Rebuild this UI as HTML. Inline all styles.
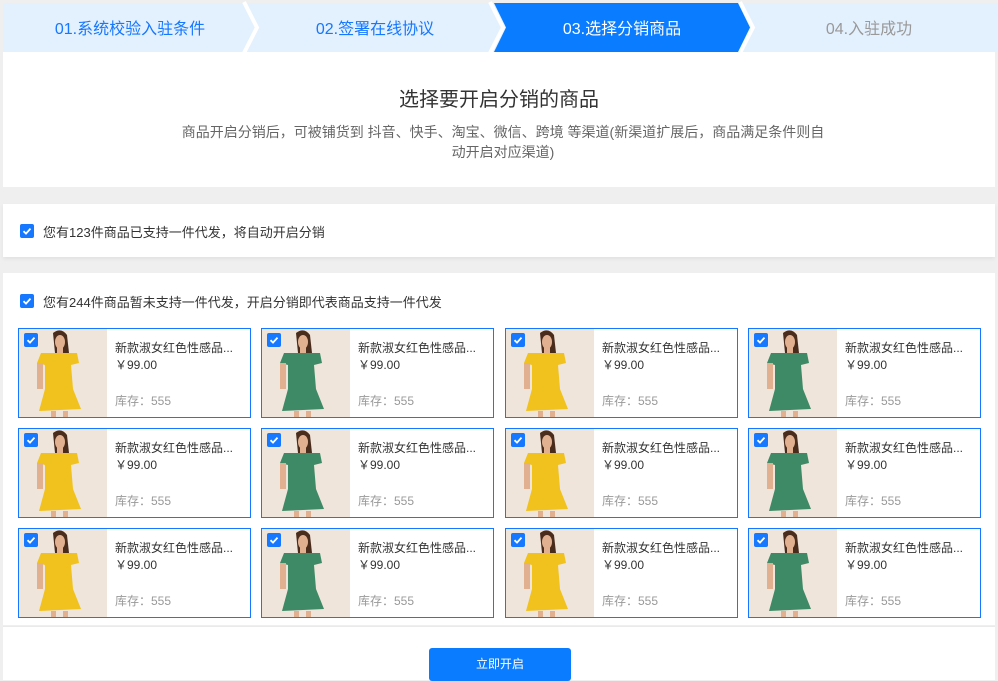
<!DOCTYPE html>
<html><head><meta charset="utf-8"><style>
*{margin:0;padding:0;box-sizing:border-box}
body{width:998px;height:680px;background:#efefef;position:relative;overflow:hidden;font-family:"Liberation Sans","Noto Sans CJK SC",sans-serif}
.abs{position:absolute}
.box{position:absolute;background:#fff;left:3px;width:992px}
.cb{position:absolute;width:14px;height:14px;background:#1677ff;border-radius:2px}
.cb svg{position:absolute;left:0;top:0}
.card{position:absolute;width:233px;height:90px;border:1px solid #1677ff;background:#fff}
.card .img{position:absolute;left:0;top:0;width:88px;height:88px}
.card .t{position:absolute;left:96px;top:10px;font-size:12px;color:#333;white-space:nowrap}
.card .p{position:absolute;left:96px;top:27px;font-size:12px;color:#333}
.card .s{position:absolute;left:96px;top:63px;font-size:12px;color:#999}
.card .cb{left:5px;top:4px}
</style></head><body>
<svg class="abs" style="left:0;top:0" width="998" height="53">
<rect x="3" y="3" width="995" height="49" fill="#e3f0fd"/>
<polygon points="494,3 738,3 750,27.5 738,52 494,52 506,27.5" fill="#0a7cff"/>
<polyline points="244,2 257,27.5 244,53" fill="none" stroke="#fff" stroke-width="4"/>
<polyline points="490,2 503,27.5 490,53" fill="none" stroke="#fff" stroke-width="4"/>
<polyline points="740,2 753,27.5 740,53" fill="none" stroke="#fff" stroke-width="4"/>
<text x="130" y="34" text-anchor="middle" font-size="16" fill="#1677ff" font-family="Liberation Sans, Noto Sans CJK SC, sans-serif">01.系统校验入驻条件</text>
<text x="375" y="34" text-anchor="middle" font-size="16" fill="#1677ff" font-family="Liberation Sans, Noto Sans CJK SC, sans-serif">02.签署在线协议</text>
<text x="622" y="34" text-anchor="middle" font-size="16" fill="#fff" font-family="Liberation Sans, Noto Sans CJK SC, sans-serif">03.选择分销商品</text>
<text x="869" y="34" text-anchor="middle" font-size="16" fill="#999" font-family="Liberation Sans, Noto Sans CJK SC, sans-serif">04.入驻成功</text>
</svg>
<svg width="0" height="0" style="position:absolute">
<defs>
<symbol id="y" viewBox="0 0 88 88">
<rect width="88" height="88" fill="#efe5db"/>
<path d="M34 4 q8 -6 14 2 l2 18 q-6 4 -14 0 z" fill="#4a2c1c"/>
<ellipse cx="41" cy="13" rx="5" ry="7" fill="#e0b090"/>
<rect x="38" y="18" width="6" height="6" fill="#e0b090"/>
<path d="M22 24 L58 24 L60 34 L52 36 L54 60 L62 80 L20 82 L26 60 L26 36 L18 34 Z" fill="#f1c21d"/>
<rect x="18" y="34" width="6" height="26" fill="#e0b090"/>
<rect x="32" y="82" width="5" height="6" fill="#e0b090"/><rect x="44" y="82" width="5" height="6" fill="#e0b090"/>
</symbol>
<symbol id="g" viewBox="0 0 88 88">
<rect width="88" height="88" fill="#efe5db"/>
<path d="M34 4 q8 -6 14 2 l2 18 q-6 4 -14 0 z" fill="#4a2c1c"/>
<ellipse cx="41" cy="13" rx="5" ry="7" fill="#e0b090"/>
<rect x="38" y="18" width="6" height="6" fill="#e0b090"/>
<path d="M22 24 L58 24 L60 34 L52 36 L54 60 L62 80 L20 82 L26 60 L26 36 L18 34 Z" fill="#3f8a66"/>
<rect x="18" y="34" width="6" height="26" fill="#e0b090"/>
<rect x="32" y="82" width="5" height="6" fill="#e0b090"/><rect x="44" y="82" width="5" height="6" fill="#e0b090"/>
</symbol>
<symbol id="ck" viewBox="0 0 14 14"><path d="M3.5 7.2 L6 9.6 L10.5 4.6" fill="none" stroke="#fff" stroke-width="1.8"/></symbol>
</defs></svg>

<div class="box" style="top:52px;height:135px">
<div class="abs" style="left:0;width:992px;top:31px;text-align:center;font-size:20px;color:#333">选择要开启分销的商品</div>
<div class="abs" style="left:100px;width:800px;top:70px;text-align:center;font-size:14px;line-height:20px;color:#666;white-space:nowrap">商品开启分销后，可被铺货到 抖音、快手、淘宝、微信、跨境 等渠道(新渠道扩展后，商品满足条件则自<br>动开启对应渠道)</div>
</div>
<div class="box" style="top:204px;height:53px;box-shadow:0 2px 4px rgba(0,0,0,.06)">
<div class="cb" style="left:17px;top:20px"><svg width="14" height="14"><use href="#ck"/></svg></div>
<div class="abs" style="left:40px;top:18px;font-size:13px;color:#333">您有123件商品已支持一件代发，将自动开启分销</div>
</div>
<div class="box" style="top:273px;height:352px">
<div class="cb" style="left:17px;top:21px"><svg width="14" height="14"><use href="#ck"/></svg></div>
<div class="abs" style="left:40px;top:19px;font-size:13px;color:#333">您有244件商品暂未支持一件代发，开启分销即代表商品支持一件代发</div>
</div>
<div class="box" style="top:626px;height:54px;border-top:1px solid #eaeaea">
<div class="abs" style="left:426px;top:21px;width:142px;height:33px;background:#0a7cff;border-radius:3px;color:#fff;font-size:12px;text-align:center;line-height:33px">立即开启</div>
</div>

<div class="card" style="left:18px;top:328px"><svg class="img" width="88" height="88"><use href="#y"/></svg><div class="cb"><svg width="14" height="14"><use href="#ck"/></svg></div><div class="t">新款淑女红色性感品...</div><div class="p">￥99.00</div><div class="s">库存：555</div></div>
<div class="card" style="left:261px;top:328px"><svg class="img" width="88" height="88"><use href="#g"/></svg><div class="cb"><svg width="14" height="14"><use href="#ck"/></svg></div><div class="t">新款淑女红色性感品...</div><div class="p">￥99.00</div><div class="s">库存：555</div></div>
<div class="card" style="left:505px;top:328px"><svg class="img" width="88" height="88"><use href="#y"/></svg><div class="cb"><svg width="14" height="14"><use href="#ck"/></svg></div><div class="t">新款淑女红色性感品...</div><div class="p">￥99.00</div><div class="s">库存：555</div></div>
<div class="card" style="left:748px;top:328px"><svg class="img" width="88" height="88"><use href="#g"/></svg><div class="cb"><svg width="14" height="14"><use href="#ck"/></svg></div><div class="t">新款淑女红色性感品...</div><div class="p">￥99.00</div><div class="s">库存：555</div></div>

<div class="card" style="left:18px;top:428px"><svg class="img" width="88" height="88"><use href="#y"/></svg><div class="cb"><svg width="14" height="14"><use href="#ck"/></svg></div><div class="t">新款淑女红色性感品...</div><div class="p">￥99.00</div><div class="s">库存：555</div></div>
<div class="card" style="left:261px;top:428px"><svg class="img" width="88" height="88"><use href="#g"/></svg><div class="cb"><svg width="14" height="14"><use href="#ck"/></svg></div><div class="t">新款淑女红色性感品...</div><div class="p">￥99.00</div><div class="s">库存：555</div></div>
<div class="card" style="left:505px;top:428px"><svg class="img" width="88" height="88"><use href="#y"/></svg><div class="cb"><svg width="14" height="14"><use href="#ck"/></svg></div><div class="t">新款淑女红色性感品...</div><div class="p">￥99.00</div><div class="s">库存：555</div></div>
<div class="card" style="left:748px;top:428px"><svg class="img" width="88" height="88"><use href="#g"/></svg><div class="cb"><svg width="14" height="14"><use href="#ck"/></svg></div><div class="t">新款淑女红色性感品...</div><div class="p">￥99.00</div><div class="s">库存：555</div></div>

<div class="card" style="left:18px;top:528px"><svg class="img" width="88" height="88"><use href="#y"/></svg><div class="cb"><svg width="14" height="14"><use href="#ck"/></svg></div><div class="t">新款淑女红色性感品...</div><div class="p">￥99.00</div><div class="s">库存：555</div></div>
<div class="card" style="left:261px;top:528px"><svg class="img" width="88" height="88"><use href="#g"/></svg><div class="cb"><svg width="14" height="14"><use href="#ck"/></svg></div><div class="t">新款淑女红色性感品...</div><div class="p">￥99.00</div><div class="s">库存：555</div></div>
<div class="card" style="left:505px;top:528px"><svg class="img" width="88" height="88"><use href="#y"/></svg><div class="cb"><svg width="14" height="14"><use href="#ck"/></svg></div><div class="t">新款淑女红色性感品...</div><div class="p">￥99.00</div><div class="s">库存：555</div></div>
<div class="card" style="left:748px;top:528px"><svg class="img" width="88" height="88"><use href="#g"/></svg><div class="cb"><svg width="14" height="14"><use href="#ck"/></svg></div><div class="t">新款淑女红色性感品...</div><div class="p">￥99.00</div><div class="s">库存：555</div></div>
</body></html>
